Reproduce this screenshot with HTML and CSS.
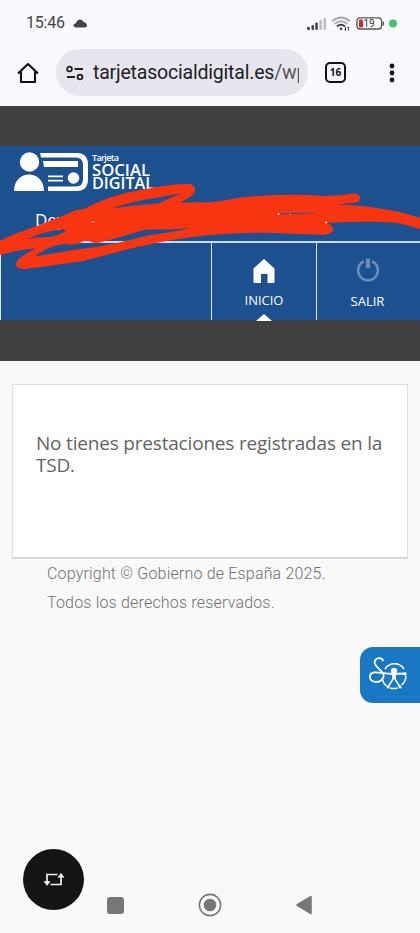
FILE: index.html
```html
<!DOCTYPE html>
<html lang="es">
<head>
<meta charset="utf-8">
<title>Tarjeta Social Digital</title>
<link rel="stylesheet" href="styles.css">
</head>
<body>
<div class="screen">
  <div class="status">
    <span class="clock">15:46</span>
    <svg class="cloud" width="15" height="9" viewBox="0 0 15 9"><path d="M3 8.500C-.5 8.500 0 4.500 3 4.200C4-.5 9-.8 10.500 3C14 3 15.500 8.500 12 8.500Z" fill="#444"/></svg>
    <svg class="indicators" width="92" height="16" viewBox="306 14 92 16">
      <g fill="#444"><rect x="307" y="26" width="3" height="3" rx="1"/><rect x="311.500" y="24" width="2.500" height="5" rx="1"/><rect x="315.300" y="21.500" width="2.500" height="7.500" rx="1"/></g>
      <g fill="#bbb"><rect x="319.400" y="19" width="2.500" height="10" rx="1"/><rect x="323.500" y="17" width="2.500" height="12" rx="1"/></g>
      <g fill="none" stroke-width="2"><path d="M332 20.300Q341 13 350 20.300M334.500 23Q341 17.500 347.500 23" stroke="#aaa"/><path d="M337 25.500Q341 22 345 25.500" stroke="#444"/></g>
      <circle cx="341" cy="27.800" r="1.400" fill="#444"/><path d="M345.500 26v3.500m3-3.500v3.500M344.500 28.500l1 1m2-2.500l1-1" stroke="#444" stroke-width="1"/>
      <rect x="357" y="16.800" width="24.500" height="11.200" rx="3" fill="#fff" stroke="#555" stroke-width="1.300"/>
      <rect x="359" y="18.500" width="4" height="8" rx="1" fill="#d9262b"/><path d="M383.300 20.500v4" stroke="#555" stroke-width="1.500"/>
      <text x="363.500" y="26" class="battery">19</text>
      <circle cx="393" cy="22.500" r="4" fill="#3fc86b"/>
    </svg>
  </div>
  <div class="toolbar">
    <svg class="home" width="22" height="22" viewBox="0 0 22 22"><path d="M1 11.500L11 2L21 11.500M4 9.500V20H18V9.500" fill="none" stroke="#111" stroke-width="2.100" stroke-linejoin="round"/></svg>
    <div class="address">
      <svg width="18" height="16" viewBox="0 0 18 16"><g fill="none" stroke="#222" stroke-width="1.800"><circle cx="3.500" cy="4" r="2.400"/><path d="M8.500 4H17M1 12H9"/><circle cx="14" cy="12" r="2.400"/></g></svg>
      <div class="url">tarjetasocialdigital.es<span>/wp</span></div>
    </div>
    <div class="tabs">16</div>
    <svg class="more" width="6" height="20" viewBox="0 0 6 20"><g fill="#151515"><circle cx="3" cy="3" r="2.400"/><circle cx="3" cy="10" r="2.400"/><circle cx="3" cy="17" r="2.400"/></g></svg>
  </div>
  <header class="header">
    <div class="banner">
      <svg class="logo" width="146" height="44" viewBox="12 149 146 44">
        <g fill="#fff"><circle cx="29.500" cy="162" r="9.700"/><path d="M14 191C14 169 44 169 44 191Z"/>
        <path d="M40 153H77Q88 153 88 165V179Q88 191 77 191H48V186.500H76Q83 186.500 83 179V165Q83 157.500 76 157.500H41Z"/>
        <path d="M43 161H78V167H44ZM48 175.500H63V177.200H48ZM48 179.800H63V181.500H48Z"/><circle cx="73.500" cy="178" r="5.800"/></g>
        <text class="brand-small" x="92" y="161" textLength="27">Tarjeta</text>
        <text class="brand" x="92" y="176" textLength="58" lengthAdjust="spacingAndGlyphs">SOCIAL</text>
        <text class="brand" x="92" y="189" textLength="62" lengthAdjust="spacingAndGlyphs">DIGITAL</text>
      </svg>
      <div class="user">Dey</div>
    </div>
    <nav class="nav">
      <div class="tab"></div>
      <div class="tab">
        <svg width="22" height="24" viewBox="0 0 22 24"><path d="M11 0L21.500 9.500V23Q21.500 24 20.500 24H14.500V15H8V24H1.500Q.5 24 .5 23V9.500Z" fill="#fff"/></svg>
        <span>INICIO</span><i class="pointer"></i>
      </div>
      <div class="tab exit">
        <svg width="24" height="24" viewBox="0 0 24 24"><path d="M8 3.300A9.900 9.900 0 1 0 16 3.300" fill="none" stroke="#688dbb" stroke-width="2.600"/><path d="M12 .5V10" stroke="#688dbb" stroke-width="4"/></svg>
        <span>SALIR</span>
      </div>
    </nav>
    <svg class="scribble" width="420" height="90" viewBox="0 182 420 90">
      <path fill="#f73611" fill-rule="evenodd" d="M0 240.500Q18 232 37 226L60 217L75 210.500Q79 209 84 209Q97 202 110 197.500Q127 192 143 189.500L157 187Q176 183.500 190 184Q196 186 195 191Q194 196 180 202.500L210 202.300Q218 202 226 200Q250 195.500 277 195Q300 194 323 196Q340 196 354 193.300Q360 194 360 198Q360 202 355 202.500L337 204.500Q360 205 377 208Q400 211 420 218V229Q405 224 394 222.500Q365 221 327 223Q334 226 333 231Q330 235 323 234.800Q300 234 277 233Q244 232 210 235Q175 238 133 248L83 261Q50 266 24 269Q17 269 16 265Q16 260 24 255L36 248Q25 249 12 252L0 255Z
      M27 239Q45 231 63 229L66 231Q57 236 50 237Q37 237 27 239Z
      M35 256.500Q42 250 54 246L66 243.500Q68 246 79 243.500Q82 241 88 240.500Q92 244 100 242.500L124 236Q145 229 149 229.500Q170 230 190 228Q175 232 150 235L117 243Q95 248 73 250Z
      M112 208.500Q126 203 143 200Q167 196 182 193Q170 198 158 203.500Q135 205 112 208.500Z
      M273 214Q295 212 320 213Q295 214.500 273 214Z"/>
      <g fill="#fff"><circle cx="278.500" cy="214" r=".9"/><circle cx="290" cy="214" r=".6"/><circle cx="326" cy="222.500" r=".9"/><circle cx="93" cy="222" r=".8"/></g>
    </svg>
  </header>
  <main>
    <section class="card">No tienes prestaciones registradas en la TSD.</section>
    <footer><p>Copyright © Gobierno de España 2025.</p><p>Todos los derechos reservados.</p></footer>
  </main>
  <div class="accessibility">
    <svg width="40" height="34" viewBox="367 657 40 34"><g fill="none" stroke="#fff"><path d="M383.500 661C381 656 373 658 375 664C377 669 386 672 383 678C380 684 369 683 370 676C371 670 379 673 392 674L405 673.500" stroke-width="1.800"/><path d="M385 669A11.300 11.300 0 0 1 404 669M406 676A12 12 0 0 1 401.500 685M397.500 688A12 12 0 0 1 390 688M386.500 686A12 12 0 0 1 382.500 680" stroke-width="1.500"/><path d="M393 676V679L388 687M395 676V679L400 687" stroke-width="1.500"/></g><g fill="#fff"><circle cx="394" cy="671" r="3.200"/><path d="M392 674h4l-.7 5h-2.600Z"/><circle cx="388" cy="687" r="1.500"/><circle cx="400" cy="687" r="1.500"/><circle cx="405" cy="674" r="1.700"/></g></svg>
  </div>
  <div class="rotate">
    <svg width="22" height="15" viewBox="0 0 22 15"><g fill="none" stroke="#eee" stroke-width="1.700"><path d="M14.500 2.500H4V11M7.500 12.500H18V4"/></g><path d="M1 9.500H7L4 13.500ZM15 5.300H21L18 1.300Z" fill="#eee" stroke="#eee" stroke-linejoin="round" stroke-width=".6"/></svg>
  </div>
  <div class="system">
    <i class="recent"></i>
    <svg width="24" height="24" viewBox="0 0 24 24"><circle cx="12" cy="12" r="10.600" fill="#fff" stroke="#777" stroke-width="1.600"/><circle cx="12" cy="12" r="6.300" fill="#777"/></svg>
    <svg width="16" height="20" viewBox="0 0 16 20"><path d="M1 10L15 1.500V18.500Z" fill="#777" stroke="#777" stroke-linejoin="round" stroke-width="1.500"/></svg>
  </div>
</div>
</body>
</html>
```

FILE: styles.css
```css
* { box-sizing: border-box; }
body { margin: 0; font-family: "Open Sans", "Noto Sans", sans-serif; }
svg { display: block; flex: none; }
.screen { position: relative; width: 420px; height: 933px; overflow: hidden; background: #f9f9f9; display: flex; flex-direction: column; }
.status { height: 46px; flex: none; background: #faf9ff; display: flex; align-items: center; padding: 0 22px 0 26px; font-family: Roboto, sans-serif; }
.clock { font-size: 16px; line-height: 18px; color: #444; letter-spacing: -.2px; width: 47px; }
.indicators { margin-left: auto; }
.battery { font: 10px Roboto, sans-serif; fill: #333; letter-spacing: -.1px; }
.toolbar { height: 60px; flex: none; background: #faf9ff; display: flex; align-items: center; padding: 0 25px 7px 17px; }
.address { width: 252px; height: 47px; margin-left: 17px; border-radius: 24px; background: #e7e6ee; display: flex; align-items: center; padding: 0 9px 0 10px; gap: 9px; }
.url { flex: 1; overflow: hidden; white-space: nowrap; font: 19.500px/28px Roboto, sans-serif; letter-spacing: -.2px; color: #202026; }
.url span { color: #555560; }
.tabs { width: 21px; height: 21px; margin-left: 17px; border: 2px solid #111; border-radius: 5px; font: bold 10px/17px "Open Sans", sans-serif; text-align: center; color: #111; }
.more { margin-left: auto; }
.header { position: relative; height: 254.500px; flex: none; background: #414141; padding: 40px 0; }
.banner { height: 95px; background: #1c508f; padding: 3px 12px; }
.brand-small { font: 600 9px "Open Sans", sans-serif; fill: #fff; }
.brand { font: 600 15.500px "Open Sans", sans-serif; fill: #fff; }
.user { margin: 17px 0 0 23px; font-size: 17px; line-height: 20px; color: #fff; }
.nav { display: grid; grid-template-columns: 211px 105px 104px; height: 79px; border-top: 2px solid #c4daf6; background: #1c508f; }
.tab { position: relative; border-left: 1px solid #d8eafc; display: flex; flex-direction: column; align-items: center; color: #fff; font-size: 13px; padding-top: 16px; }
.tab span { line-height: 18px; margin-top: 8px; }
.exit { padding: 15px 2px 0 0; }
.exit span { margin-top: 10px; }
.pointer { position: absolute; bottom: -1px; border: 8px solid transparent; border-top: 0; border-bottom: 7px solid #fff; }
.scribble { position: absolute; left: 0; top: 76px; }
main { padding: 23px 12px 0; }
.card { height: 175px; background: #fff; border: 1px solid #ddd; border-bottom: 2px solid #d8d8d8; padding: 47px 20px 0 23px; font-size: 19px; line-height: 22px; letter-spacing: -.19px; color: #646464; }
footer { padding: 0 0 0 35px; font: 300 16px/29px Roboto, sans-serif; letter-spacing: .18px; color: #707070; }
footer p { margin: 0; }
.accessibility { position: absolute; right: 0; top: 647px; width: 60px; height: 56px; border-radius: 13px 0 0 13px; background: #1977c3; padding: 10px 0 0 7px; }
.rotate { position: absolute; left: 23px; top: 849px; width: 61px; height: 61px; border-radius: 50%; background: #141414; display: flex; align-items: center; justify-content: center; }
.system { margin-top: auto; height: 56px; padding: 0 108px 0 107px; display: flex; align-items: center; justify-content: space-between; }
.recent { width: 17px; height: 17px; background: #777; border-radius: 3px; }
```
